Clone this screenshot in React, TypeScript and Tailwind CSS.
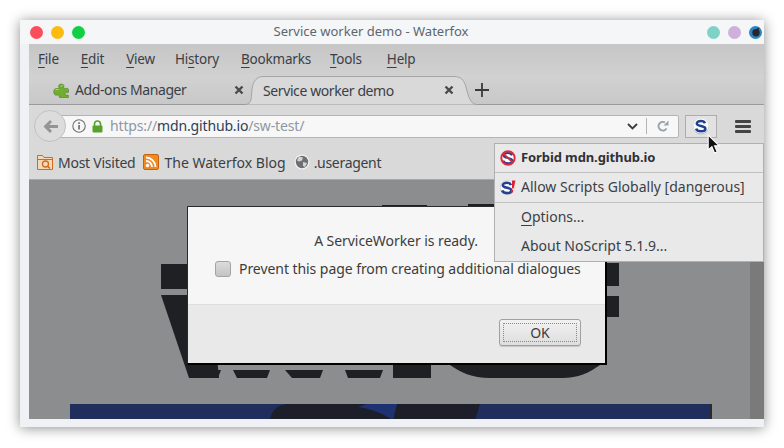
import React from "react";

const S_PATH = "M12 5.300C11.400 3.700 9.800 3 7.800 3 5.300 3 3.800 4 3.800 5.500c0 3.400 8.600 1.600 8.600 5.200 0 1.700-1.900 2.600-4.500 2.600-2.400 0-4.200-.9-4.800-2.700";

const Puzzle = () => (
  <svg width="17" height="16" viewBox="0 0 17 16" className="shrink-0">
    <path d="M1 8.500c0-1 1-2 2.500-2h2c.5 0 .8-.5.4-1-.7-1-.4-3 1.900-3.400 2.200-.3 3.500 1 3.100 2.500-.2.800-.5 1.200.2 1.800h2.900c1.200 0 1.500.6 1.500 1.600v2c0 .6-.8.800-1.500.6-1-.3-2 .3-1.900 1.400 0 1 1.100 1.200 1.800 1.100.8-.1 1.600 0 1.600.7V15c0 .6-.6 1-1.200 1H7.500c-.7 0-1.300-.5-1.300-1.200 0-1-.1-2-1.600-1.800-1 .2-1.800.4-2.700-.3C.8 11.800.5 10 1 8.500z" fill="#6fae2e" stroke="#4f7f22" strokeWidth=".6" />
    <path d="M7.500 4c1 .3 2-.3 2.600-1M2.500 8c1-.6 2-.6 3-.4" stroke="#b4dc7c" strokeWidth="1" fill="none" />
  </svg>
);

const Close = () => (
  <svg width="10" height="10" viewBox="0 0 10 10" className="shrink-0">
    <path d="M1.500 1.500l7 7M8.500 1.500l-7 7" stroke="#4a4a4a" strokeWidth="2.400" />
  </svg>
);

const Back = () => (
  <svg width="15" height="13" viewBox="0 0 15 13">
    <path d="M7 0L.5 6.500 7 13l2-2-2.800-2.900H15V4.900H6.200L9 2z" fill="#949494" />
  </svg>
);

const Info = () => (
  <svg width="14" height="14" viewBox="0 0 14 14" className="shrink-0">
    <circle cx="7" cy="7" r="6.200" fill="none" stroke="#6f6f6f" strokeWidth="1.100" />
    <rect x="6.200" y="6" width="1.700" height="4.500" fill="#6f6f6f" />
    <rect x="6.200" y="3.300" width="1.700" height="1.700" fill="#6f6f6f" />
  </svg>
);

const Lock = () => (
  <svg width="11" height="13" viewBox="0 0 11 13" className="shrink-0">
    <path d="M2.500 6V4a3 3 0 016 0v2" fill="none" stroke="#58a22b" strokeWidth="1.600" />
    <rect x="0.500" y="5.500" width="10" height="7" rx="1" fill="#58a22b" />
  </svg>
);

const Chevron = () => (
  <svg width="11" height="7" viewBox="0 0 11 7" className="shrink-0">
    <path d="M1 1l4.500 4.500L10 1" fill="none" stroke="#3c3c3c" strokeWidth="1.800" />
  </svg>
);

const Reload = () => (
  <svg width="12" height="12" viewBox="0 0 12 12" className="shrink-0">
    <path d="M9.500 8.500A4.300 4.300 0 118 2.500" fill="none" stroke="#9aa3ad" strokeWidth="2" />
    <path d="M6.500 5.500h5V0.500z" fill="#9aa3ad" />
  </svg>
);

const NoScriptS = () => (
  <svg width="16" height="17" viewBox="0 0 16 17" className="shrink-0">
    <circle cx="8" cy="9" r="7.500" fill="#b0b5be" />
    <circle cx="8" cy="8" r="7.500" fill="#fbfbfb" />
    <path d={S_PATH} fill="none" stroke="#1c418f" strokeWidth="2.500" />
  </svg>
);

const Forbid = () => (
  <svg width="16" height="16" viewBox="0 0 16 16" className="shrink-0">
    <circle cx="8" cy="8" r="7.500" fill="#fff" />
    <path d={S_PATH} fill="none" stroke="#24408e" strokeWidth="2.200" />
    <circle cx="8" cy="8" r="6.700" fill="none" stroke="#dc2a3c" strokeWidth="2" />
    <path d="M3 3.500l10 9" stroke="#dc2a3c" strokeWidth="1.800" />
  </svg>
);

const AllowGlobal = () => (
  <svg width="16" height="16" viewBox="0 0 16 16" className="shrink-0">
    <circle cx="7.500" cy="8.500" r="7.300" fill="#fbfbfb" stroke="#c0c4cb" strokeWidth=".6" />
    <g transform="translate(-1 .8)">
      <path d={S_PATH} fill="none" stroke="#24408e" strokeWidth="2.600" />
    </g>
    <path d="M12 1.500h3.500l-1.800 8h-1.700zM11 11h2.200l-.4 2.400h-2.200z" fill="#e02030" />
  </svg>
);

const FolderIcon = () => (
  <svg width="16" height="16" viewBox="0 0 16 16" className="shrink-0">
    <path d="M0.500 15.500V1.500h5l1.500 2h8.500v12z" fill="#f4d9b8" stroke="#d2691e" />
    <path d="M1 5.500h14" stroke="#d2691e" />
    <circle cx="8.500" cy="10" r="3" fill="none" stroke="#d2691e" strokeWidth="1.300" />
    <path d="M10.500 12l2.500 2.500" stroke="#d2691e" strokeWidth="1.500" />
  </svg>
);

const Rss = () => (
  <svg width="16" height="16" viewBox="0 0 16 16" className="shrink-0">
    <rect x="0.500" y="0.500" width="15" height="15" rx="1.500" fill="#f08a24" stroke="#c8620f" />
    <circle cx="4.500" cy="11.500" r="1.700" fill="#fff" />
    <path d="M3 7a6 6 0 016 6M3 3.500A9.500 9.500 0 0112.500 13" fill="none" stroke="#fff" strokeWidth="1.800" />
  </svg>
);

const Globe = () => (
  <svg width="16" height="16" viewBox="0 0 16 16" className="shrink-0">
    <circle cx="8" cy="8" r="7.500" fill="#f2f2f2" />
    <circle cx="8" cy="8" r="6.200" fill="#6d6f72" />
    <path d="M5 2.500l4 1-1 3-3 1-2-1zM9 8l4 1-2 4-2-1z" fill="#d4d4d4" />
  </svg>
);

const Cursor = () => (
  <svg width="14" height="20" viewBox="0 0 13 19">
    <path d="M1 1v14l3.500-3 2.500 6 2.500-1-2.500-5.800H11.500z" fill="#111" stroke="#fff" strokeWidth="1" />
  </svg>
);

const WaterfoxBall = () => (
  <svg width="13" height="13" viewBox="0 0 13 13">
    <circle cx="6.500" cy="6.500" r="6.500" fill="#2a86c4" />
    <circle cx="7" cy="6.800" r="3.700" fill="#26282c" />
    <path d="M7 3l3.500-1.500L9 5z" fill="#26282c" />
  </svg>
);

const Underlined = ({ pre = "", u, post = "", className = "" }: { pre?: string; u: string; post?: string; className?: string }) => (
  <span className={className}>
    {pre}
    <span className="underline underline-offset-[3px] decoration-1">{u}</span>
    {post}
  </span>
);

const MenuRow = ({ icon, children, className = "" }: { icon?: React.ReactNode; children: React.ReactNode; className?: string }) => (
  <div className={`flex items-center pl-[5px] ${className}`}>
    <div className="w-[21px] shrink-0">{icon}</div>
    {children}
  </div>
);

export default function App() {
  return (
    <div className="w-[784px] h-[448px] overflow-hidden bg-white pt-[20px] pl-[20px] text-[#3b4046] text-[14px] font-['Noto_Sans','Open_Sans',sans-serif]">
      <div className="relative w-[744px] h-[407px] flex flex-col bg-[#eff1f4] shadow-[0_1px_12px_rgba(0,0,0,0.45)]">
        {/* Title bar */}
        <div className="relative flex items-center justify-center h-[24px] shrink-0 bg-[#f5f6f7] pr-[42px] text-[13px] text-[#5c6670]">
          <div className="absolute left-[10px] top-[6px] flex gap-[8px]">
            <span className="w-[13px] h-[13px] rounded-full bg-[#f84f5a]" />
            <span className="w-[13px] h-[13px] rounded-full bg-[#fdbb0d]" />
            <span className="w-[13px] h-[13px] rounded-full bg-[#10cf45]" />
          </div>
          <span>Service worker demo - Waterfox</span>
          <div className="absolute right-[2px] top-[6px] flex gap-[8px]">
            <span className="w-[13px] h-[13px] rounded-full bg-[#7fd3c6]" />
            <span className="w-[13px] h-[13px] rounded-full bg-[#ceb0da]" />
            <WaterfoxBall />
          </div>
        </div>

        <div className="flex-1 min-h-0 ml-[9px] mb-[8px] flex flex-col relative">
          {/* Menu bar */}
          <div className="h-[31px] shrink-0 flex items-center gap-[21px] pl-[9px] pb-[1px] bg-gradient-to-b from-[#c6c6c6] to-[#d0d0d0] text-[13.500px] tracking-[-0.2px]">
            <Underlined u="F" post="ile" />
            <Underlined u="E" post="dit" className="ml-[1px]" />
            <Underlined u="V" post="iew" className="ml-[1px]" />
            <Underlined pre="Hi" u="s" post="tory" className="-ml-[1px]" />
            <Underlined u="B" post="ookmarks" className="ml-[1px]" />
            <Underlined u="T" post="ools" className="-ml-[2px]" />
            <Underlined u="H" post="elp" className="ml-[4px]" />
          </div>

          {/* Tabs */}
          <div className="h-[30px] shrink-0 flex bg-gradient-to-b from-[#d2d2d2] to-[#c8c8c8] border-b border-[#9a9a9a] tracking-[-0.4px]">
            <div className="w-[221px] shrink-0 flex items-center pl-[24px] pr-[6px]">
              <Puzzle />
              <span className="ml-[5px] flex-1">Add-ons Manager</span>
              <Close />
            </div>
            <div className="relative -ml-[5px] w-[232px] shrink-0 flex items-center pl-[18px] pr-[23px] -mb-px">
              <svg width="232" height="30" viewBox="0 0 232 30" className="absolute left-0 top-0">
                <path d="M0 29.500C8 29.500 6 20 7 14 8 6 12 1.500 18 1.500H209C216 1.500 219 5 221 12 223 20 225 29.500 232 29.500z" fill="#d9d9d9" />
                <path d="M0 29.500C8 29.500 6 20 7 14 8 6 12 1.500 18 1.500H209C216 1.500 219 5 221 12 223 20 225 29.500 232 29.500" fill="none" stroke="#a5a5a5" />
              </svg>
              <span className="relative flex-1">Service worker demo</span>
              <span className="relative"><Close /></span>
            </div>
            <div className="-ml-[2px] flex items-center">
              <svg width="14" height="14" viewBox="0 0 14 14"><path d="M7 0v14M0 7h14" stroke="#3a3a3a" strokeWidth="1.800" /></svg>
            </div>
          </div>

          {/* Nav bar */}
          <div className="relative h-[38px] shrink-0 flex items-center bg-[#d9d9d9] pt-[4px] pl-[31px] pr-[13px]">
            <div className="absolute z-10 left-[5px] top-[5px] w-[32px] h-[32px] rounded-full bg-[#dcdcdc] border border-[#c2c2c2] flex items-center justify-center">
              <Back />
            </div>
            <div className="h-[23px] w-[619px] shrink-0 flex items-center bg-[#f7f7f7] border border-[#b4b4b4] rounded-r-[2px] pl-[11px] pr-[9px]">
              <Info />
              <span className="ml-[6px]"><Lock /></span>
              <span className="ml-[7px] -mt-[2px] flex-1 text-[#8e98a3] tracking-[-0.15px]">
                https://<span className="text-[#2c3f55]">mdn.github.io</span>/sw-test/
              </span>
              <Chevron />
              <span className="ml-[8px] mr-[10px] h-[16px] w-px bg-[#b4b4b4]" />
              <Reload />
            </div>
            <div className="ml-[6px] w-[32px] h-[23px] shrink-0 flex items-center justify-center bg-[#e2e2e2] border border-[#adadad]">
              <NoScriptS />
            </div>
            <div className="ml-[5px] h-[36px] -mt-[4px] w-px bg-[#c6c6c6]" />
            <div className="ml-[13px] flex flex-col gap-[2px]">
              <span className="block w-[16px] h-[3px] rounded-[1px] bg-[#444]" />
              <span className="block w-[16px] h-[3px] rounded-[1px] bg-[#444]" />
              <span className="block w-[16px] h-[3px] rounded-[1px] bg-[#444]" />
            </div>
          </div>

          {/* Bookmarks */}
          <div className="h-[37px] shrink-0 flex items-center pl-[8px] pt-[2px] bg-[#d9d9d9] border-b border-[#a8a8a8]">
            <FolderIcon />
            <span className="ml-[5px] tracking-[-0.25px]">Most Visited</span>
            <span className="ml-[8px]"><Rss /></span>
            <span className="ml-[5px]">The Waterfox Blog</span>
            <span className="ml-[8px]"><Globe /></span>
            <span className="ml-[4px] tracking-[-0.3px]">.useragent</span>
          </div>

          {/* Content */}
          <div className="relative flex-1 min-h-0 overflow-hidden bg-[#8c8d8e]">
            <svg width="735" height="240" viewBox="0 0 735 240" className="absolute left-0 top-0">
              <g fill="#1f2023">
                <rect x="132" y="84" width="26" height="25" />
                <path d="M132 115h50l8 83h-30z" />
                <path d="M159 190h33l-3 8h-27zM204 190h37l-3 8h-30zM256 190h38l-3 8h-28zM316 190h38l-3 8h-32z" />
                <rect x="364" y="180" width="38" height="18" />
                <path d="M421 185h150c-12 8-20 13-40 13h-70c-18 0-30-6-40-13z" />
                <rect x="578" y="83" width="12" height="23" />
                <rect x="578" y="116" width="12" height="21" />
                <rect x="353" y="25" width="45" height="1" />
                <rect x="439" y="24" width="30" height="2" />
              </g>
              <rect x="41" y="224" width="640" height="16" fill="#1f2e5c" />
              <path d="M241 240c1-8 6-14 16-16h194l-5 16z" fill="#1c1f2a" />
              <path d="M338 224h30l-4 16c-8-5-20-11-35-13z" fill="#1e3272" />
              <rect x="681" y="224" width="2" height="16" fill="#2a2a2a" />
            </svg>
            <div className="absolute right-0 top-0 bottom-0 w-[14px] bg-[#7a7a7a]" />

            {/* Dialog */}
            <div className="absolute left-[158px] top-[26px] w-[420px] h-[159px] flex flex-col bg-[#f6f6f6] border-t border-l border-[#2a2a2a] border-r-2 border-b-2 border-r-black border-b-black">
              <div className="h-[98px] shrink-0 flex flex-col border-b border-[#dedede] text-[#3c3c3c] tracking-[-0.06px]">
                <div className="mt-[23px] pr-[1px] text-center">A ServiceWorker is ready.</div>
                <div className="mt-[7px] ml-[27px] flex items-center gap-[8px]">
                  <span className="w-[16px] h-[16px] rounded-[3px] bg-gradient-to-b from-[#dcdcdc] to-[#c4c4c4] border border-[#a3a3a3]" />
                  <span>Prevent this page from creating additional dialogues</span>
                </div>
              </div>
              <div className="flex-1 bg-[#e9e9e9] flex items-start justify-end pr-[24px] pt-[14px]">
                <div className="w-[82px] h-[27px] rounded-[3px] border border-[#a0a0a0] bg-gradient-to-b from-[#f2f2f2] to-[#dedede] p-[3px] shadow-[0_1px_0_#c8c8c8]">
                  <div className="w-full h-full border border-dotted border-[#8a8a8a] flex items-center justify-center text-[#3c3c3c]">OK</div>
                </div>
              </div>
            </div>
          </div>

          {/* NoScript menu */}
          <div className="absolute left-[465px] top-[99px] w-[270px] h-[119px] flex flex-col bg-[#e9e9e9] border border-[#b0b0b0] text-[#3b4046]">
            <MenuRow icon={<Forbid />} className="h-[29px] border-b border-[#c0c0c0] font-bold text-[13px] tracking-[-0.1px] text-[#2e3237]">Forbid mdn.github.io</MenuRow>
            <MenuRow icon={<AllowGlobal />} className="h-[30px] pb-[2px] border-b border-[#c0c0c0]">Allow Scripts Globally [dangerous]</MenuRow>
            <MenuRow className="h-[29px] pb-[2px]"><Underlined u="O" post="ptions..." /></MenuRow>
            <MenuRow className="h-[29px] pb-[2px]">About NoScript 5.1.9...</MenuRow>
          </div>

          {/* Pointer */}
          <div className="absolute left-[678px] top-[90px]">
            <Cursor />
          </div>
        </div>
      </div>
    </div>
  );
}
